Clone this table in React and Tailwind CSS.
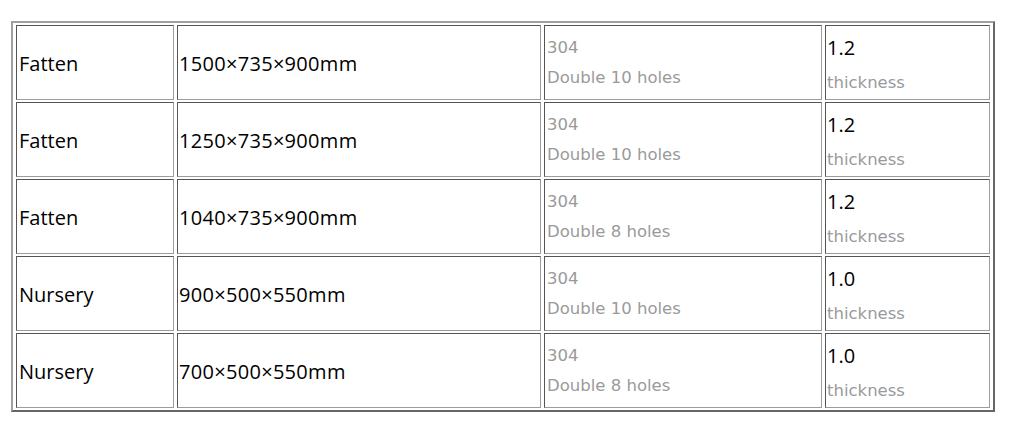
import React from "react";

const rows = [
  { type: "Fatten", size: "1500×735×900mm", holes: "Double 10 holes", thick: "1.2" },
  { type: "Fatten", size: "1250×735×900mm", holes: "Double 10 holes", thick: "1.2" },
  { type: "Fatten", size: "1040×735×900mm", holes: "Double 8 holes", thick: "1.2" },
  { type: "Nursery", size: "900×500×550mm", holes: "Double 10 holes", thick: "1.0" },
  { type: "Nursery", size: "700×500×550mm", holes: "Double 8 holes", thick: "1.0" },
];

const cell =
  "h-[75px] p-[1px] align-middle border border-t-[#555555] border-l-[#555555] border-b-[#9c9c9c] border-r-[#9c9c9c]";

function App() {
  return (
    <div className="w-full min-h-screen bg-white pl-[11px] pt-[21px]">
      <table className="table-fixed w-[981px] border-separate border-spacing-x-[3px] border-spacing-y-[2px] border-2 border-t-[#a0a0a0] border-l-[#a0a0a0] border-b-[#666666] border-r-[#666666] font-['Open_Sans',sans-serif] text-[20px] text-black">
        <colgroup>
          <col className="w-[158px]" />
          <col className="w-[364px]" />
          <col className="w-[278px]" />
          <col className="w-[165px]" />
        </colgroup>
        <tbody>
          {rows.map((r, i) => (
            <tr key={i}>
              <td className={cell + " pl-[2px]"}>
                <div className="pt-[2px]">{r.type}</div>
              </td>
              <td className={cell + " pl-[1px]"}>
                <div className="pt-[2px] tracking-[0.3px]">{r.size}</div>
              </td>
              <td className={cell + " pl-[2px]"}>
                <div className="font-['DejaVu_Sans',sans-serif] text-[16.5px] text-[#9a9a9a] pt-[1px]">
                  <div className="leading-[30px]">304</div>
                  <div className="leading-[30px]">{r.holes}</div>
                </div>
              </td>
              <td className={cell}>
                <div className="pt-[5px]">
                  <div className="leading-[30px]">{r.thick}</div>
                  <div className="leading-[30px] mt-[5px] font-['DejaVu_Sans',sans-serif] text-[16.5px] text-[#9a9a9a]">
                    thickness
                  </div>
                </div>
              </td>
            </tr>
          ))}
        </tbody>
      </table>
    </div>
  );
}

export default App;
